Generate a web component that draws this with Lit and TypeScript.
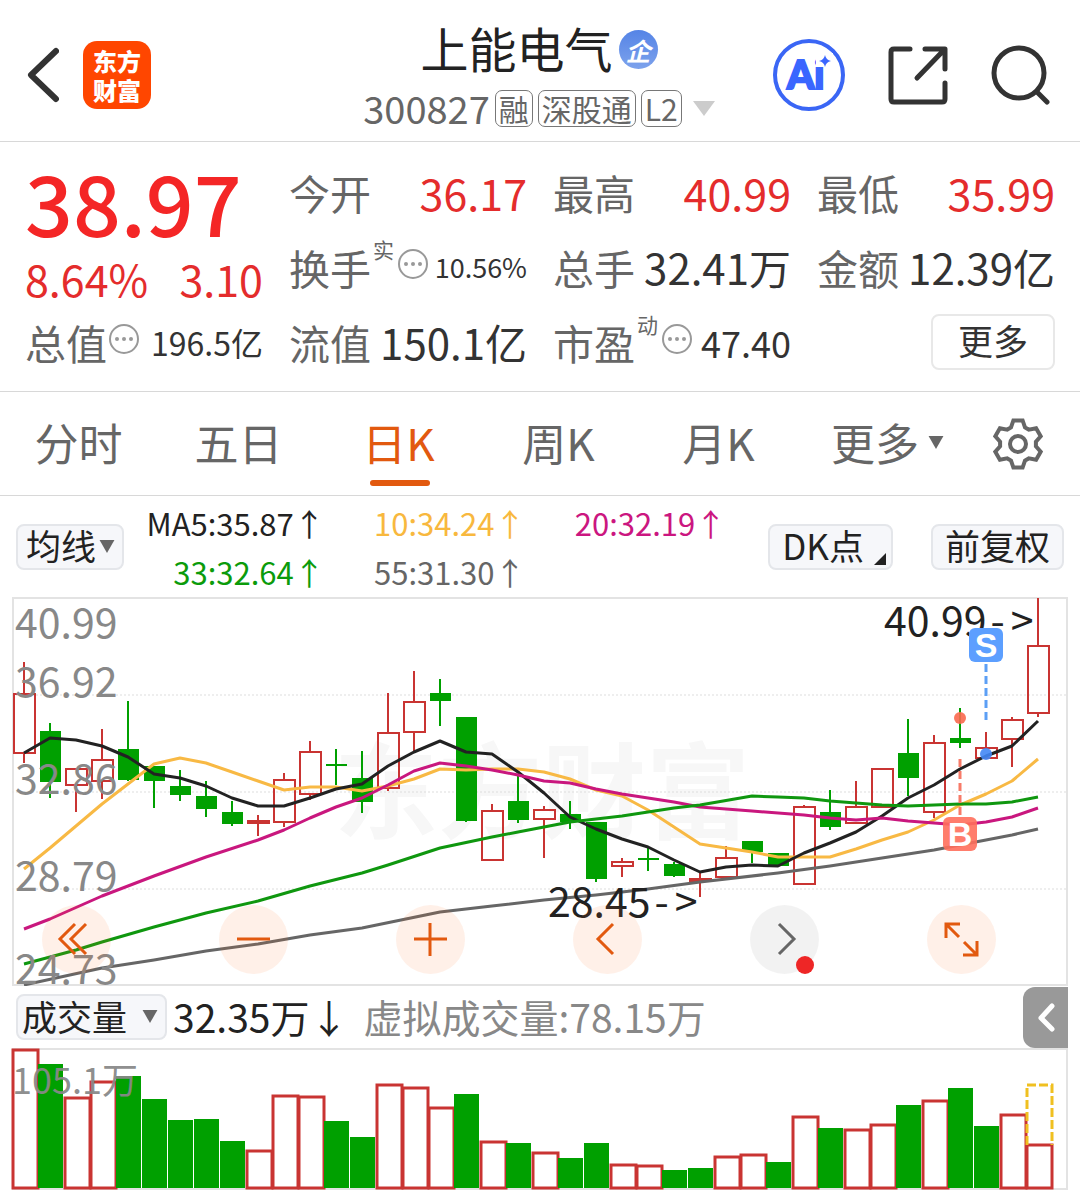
import { LitElement, html, svg, css } from "lit";
import { customElement, state } from "lit/decorators.js";
import { classMap } from "lit/directives/class-map.js";

type Candle = [up: 0 | 1, high: number, top: number, bottom: number, low: number, volumeTop: number];

/* Candle positions in plot units; 1 marks a rising day. */
const CANDLES: Candle[] = [
  [1, 662, 694, 753, 763, 1050], [0, 723, 731, 782, 798, 1064], [1, 769, 769, 785, 812, 1098],
  [1, 729, 760, 781, 799, 1082], [0, 701, 749, 780, 781, 1076], [0, 766, 766, 781, 808, 1099],
  [0, 770, 786, 795, 801, 1120], [0, 781, 796, 809, 817, 1119], [0, 801, 812, 824, 826, 1141],
  [1, 815, 821, 823, 836, 1151], [1, 773, 780, 822, 827, 1096], [1, 741, 752, 794, 800, 1097],
  [0, 749, 764, 766, 785, 1121], [0, 751, 778, 802, 813, 1137], [1, 693, 733, 788, 791, 1085],
  [1, 671, 702, 732, 751, 1088], [1, 679, 693, 701, 726, 1108], [0, 717, 717, 821, 822, 1094],
  [1, 804, 811, 860, 860, 1142], [0, 776, 801, 820, 823, 1143], [1, 806, 810, 819, 858, 1153],
  [0, 801, 814, 822, 829, 1158], [0, 822, 822, 879, 882, 1143], [1, 858, 862, 866, 877, 1165],
  [1, 848, 858, 860, 871, 1166], [0, 862, 864, 876, 877, 1170], [0, 872, 879, 881, 897, 1168],
  [1, 846, 858, 877, 877, 1157], [1, 841, 841, 852, 863, 1155], [0, 853, 853, 866, 866, 1162],
  [1, 805, 807, 884, 885, 1117], [0, 790, 812, 827, 830, 1128], [1, 781, 807, 823, 823, 1130],
  [1, 769, 769, 807, 807, 1125], [0, 719, 753, 778, 796, 1105], [1, 735, 743, 812, 818, 1101],
  [0, 708, 738, 743, 748, 1088], [0, 732, 748, 758, 758, 1126], [1, 717, 720, 739, 767, 1115],
  [1, 598, 646, 713, 717, 1145],
];
/* Days whose candle direction differs from the direction of the volume bar. */
const CANDLE_FLIPPED = new Set([16, 24, 26, 28, 37]);

const AVERAGES = [
  { cls: "ma55", points: "24,985 102,968 154,960 206,951 258,944 310,935 362,928 440,912 492,906 544,900 596,895 648,889 700,882 778,873 830,866 882,858 934,850 986,840 1012,835 1038,829" },
  { cls: "ma10", points: "24,869 50,848 76,826 102,804 128,784 154,764 180,758 206,763 232,772 258,781 284,790 310,787 336,787 362,791 388,786 414,779 440,769 466,770 492,769 518,769 544,772 570,779 596,790 622,796 648,810 674,827 700,844 726,848 752,852 778,857 804,857 830,857 856,849 882,840 908,832 934,820 960,805 986,794 1012,781 1038,759" },
  { cls: "ma5", points: "24,753 50,738 76,740 102,746 128,757 154,774 180,778 206,786 232,798 258,806 284,806 310,798 336,789 362,784 388,766 414,752 440,741 466,752 492,754 518,772 544,793 570,817 596,829 622,839 648,847 674,860 700,872 726,867 752,865 778,866 804,853 830,843 856,832 882,816 908,798 934,785 960,769 986,756 1012,746 1038,721" },
  { cls: "ma20", points: "24,929 50,919 102,896 154,876 206,857 258,840 284,830 310,818 336,807 362,798 388,785 414,771 440,763 466,766 492,770 518,775 544,781 570,783 596,789 622,794 674,802 700,807 752,811 804,815 830,818 856,820 882,818 908,821 934,823 960,825 986,822 1012,817 1038,808" },
  { cls: "ma33", points: "24,964 76,950 102,942 154,927 206,913 258,901 310,886 362,873 388,865 440,848 492,837 518,832 570,822 622,816 674,808 700,805 752,796 778,797 804,798 830,801 882,805 908,806 960,804 986,804 1012,802 1038,797" },
];

const gearPath = () => {
  const pts: string[] = [];
  const at = (deg: number, r: number) => {
    const a = (deg * Math.PI) / 180;
    pts.push(`${(27 + r * Math.cos(a)).toFixed(1)},${(27 + r * Math.sin(a)).toFixed(1)}`);
  };
  for (let t = -90; t < 270; t += 60) {
    at(t - 23, 18); at(t - 11, 24); at(t + 11, 24); at(t + 23, 18);
  }
  return "M" + pts.join("L") + "Z";
};

const caret = html`<svg class="caret" viewBox="0 0 16 14" aria-hidden="true"><path d="M0 0H16L8 14Z" /></svg>`;
const dots = html`<svg class="dots" viewBox="0 0 32 32" aria-hidden="true">
  <circle cx="16" cy="16" r="14" /><g><circle cx="9" cy="16" r="2" /><circle cx="16" cy="16" r="2" /><circle cx="23" cy="16" r="2" /></g></svg>`;

@customElement("app-root")
export class AppRoot extends LitElement {
  static styles = css`
    :host { display: block; background: #fff; color: #333; font-family: "Noto Sans CJK SC", sans-serif; }
    * { box-sizing: border-box; }
    button, select { font: inherit; color: inherit; background: none; border: 0; margin: 0; padding: 0; cursor: pointer; }
    svg { display: block; }
    h1, dl, dt, dd, p { margin: 0; font-weight: 400; }

    header { display: grid; grid-template-columns: 1fr auto 1fr; align-items: center; padding: 18px 29px 13px 27px; border-bottom: 1px solid #d8d8d8; }
    .left, .right, .code, .title { display: flex; align-items: center; }
    .left, .right { padding-top: 3px; }
    .left { gap: 24px; }
    .right { justify-content: flex-end; gap: 43px; }
    .stroke { fill: none; stroke: #333; stroke-width: 5; stroke-linecap: round; stroke-linejoin: round; }
    .back { stroke-width: 6; }
    .logo { display: grid; place-content: center; width: 68px; height: 68px; border-radius: 14px; background: #ff4600; color: #fff; font-size: 24px; font-weight: 900; line-height: 29px; text-decoration: none; text-align: center; }
    .middle { display: grid; justify-items: center; gap: 12px; }
    .title { gap: 6px; height: 58px; color: #222; }
    .title h1 { font-size: 48px; line-height: 58px; }
    .badge { display: grid; place-items: center; width: 39px; height: 39px; margin-top: 5px; border-radius: 50%; background: linear-gradient(#5584e6, #7da2ec); color: #fff; font-size: 25px; line-height: 36px; font-weight: 700; font-style: italic; }
    .code { gap: 5px; height: 40px; color: #666; font-size: 38px; line-height: 38px; }
    .tag { border: 1px solid #777; border-radius: 7px; padding: 0 3px; font-size: 30px; line-height: 35px; }
    .code svg { margin-left: 6px; fill: #ccc; }
    .ai { fill: none; stroke: #3a66f5; stroke-width: 4; }
    .aitext { font: 900 39px Lato, sans-serif; fill: #3a66ff; stroke: #3a66ff; stroke-width: 2; }
    .mask { fill: #fff; }
    .spark { fill: #3a66ff; }

    .quote { display: grid; grid-template-columns: repeat(4, 1fr); grid-auto-rows: 75px; column-gap: 26px; padding: 12px 25px; border-bottom: 1px solid #d8d8d8; }
    .price { grid-row: span 2; color: #f42626; }
    .last { font-size: 84px; line-height: 94px; font-weight: 500; white-space: nowrap; }
    .change { display: flex; justify-content: space-between; color: #e42c2c; font-size: 43px; line-height: 60px; }
    .pair { display: flex; align-items: center; justify-content: space-between; white-space: nowrap; line-height: 60px; }
    .pair dt { display: flex; align-items: center; color: #666; font-size: 41px; }
    .pair sup { align-self: flex-start; margin: 0 2px; font-size: 21px; line-height: 24px; }
    .pair dd { font-size: 42px; }
    .pair dd.up { color: #e42c2c; font-size: 43px; }
    .pair dd.s { font-size: 27px; }
    .pair dd.m { font-size: 32px; }
    .pair dd.l { font-size: 36px; }
    .dots { width: 32px; height: 32px; margin: 0 0 6px 1px; fill: none; stroke: #999; stroke-width: 2; }
    .dots g { fill: #999; stroke: none; }
    .more { align-self: center; justify-self: end; width: 124px; height: 56px; padding-bottom: 3px; border: 2px solid #e8e8e8; border-radius: 8px; font-size: 35px; line-height: 48px; }

    .tabs { display: grid; grid-template-columns: repeat(5, 160fr) 178fr 80fr; height: 104px; padding-right: 22px; border-bottom: 1px solid #d8d8d8; }
    .tab { display: grid; grid-template-rows: 88px 6px; justify-items: center; color: #666; font-size: 44px; line-height: 88px; white-space: nowrap; }
    .tab span { display: flex; align-items: center; gap: 9px; height: 100px; padding-right: 3px; }
    .tab.on { color: #e2590f; }
    .tab.on::after { content: ""; width: 60px; height: 6px; border-radius: 3px; background: #e2590f; }
    .caret { width: 16px; height: 13px; fill: #666; }
    .gear { display: grid; place-items: center; }
    .gear svg { fill: none; stroke: #666; stroke-width: 4; }

    .tools { display: flex; align-items: center; height: 101px; padding: 0 16px; }
    .box { display: flex; align-items: center; height: 46px; border: 2px solid #e4e6ea; border-radius: 8px; background: #f6f7fa; color: #222; font-size: 35px; line-height: 40px; white-space: nowrap; }
    .pick { position: relative; }
    .pick select { appearance: none; width: 100%; height: 42px; padding: 0 0 3px 8px; line-height: 38px; outline-offset: 2px; }
    .pick .caret { position: absolute; right: 7px; top: 14px; pointer-events: none; }
    .pick.avg { width: 108px; }
    .pick.vol { width: 151px; }
    .pick.vol select { padding-left: 4px; }
    .plain { padding: 0 12px 3px; }
    .dk { gap: 10px; padding-right: 5px; margin-right: 38px; }
    .dk svg { align-self: flex-end; fill: #222; }
    .averages { flex: 1; display: grid; grid-template-columns: repeat(3, 1fr); grid-auto-rows: 49px; justify-items: end; margin-right: 42px; font-size: 31px; line-height: 49px; white-space: nowrap; }
    .c5 { color: #222; } .c10 { color: #f8b83e; } .c20 { color: #cb1680; } .c33 { color: #0b9b0b; } .c55 { color: #666; }

    .chart { position: relative; }
    .chart svg.plot, .volume { width: 100%; height: auto; }
    .frame { fill: none; stroke: #e3e3e3; stroke-width: 2; }
    .grid { stroke: #ddd; stroke-width: 1; stroke-dasharray: 2 2; }
    .mark { font: 700 104px "Noto Sans CJK SC", sans-serif; fill: #f7f7f7; }
    .up { fill: none; stroke: #c93432; stroke-width: 2; }
    .down { fill: #00a000; stroke: #00a000; stroke-width: 2; }
    .body { stroke-width: 0; }
    .ma { fill: none; stroke-width: 3; stroke-linejoin: round; }
    .ma5 { stroke: #222; } .ma10 { stroke: #f8b944; } .ma20 { stroke: #c9177e; } .ma33 { stroke: #0f970f; } .ma55 { stroke: #666; }
    .axis { font-size: 41px; fill: #888; }
    .note { font-size: 41px; fill: #222; }
    .signal { font: 700 34px "Liberation Sans", sans-serif; fill: #fff; text-anchor: middle; }
    .sell { fill: #5c9fff; } .buy { fill: #ff6f5c; fill-opacity: 0.9; }
    .sellline { stroke: #5c9ff5; stroke-width: 3; stroke-dasharray: 8 4; }
    .buyline { stroke: #f77b68; stroke-width: 3; stroke-dasharray: 8 4; }
    .selldot { fill: #4287f5; fill-opacity: 0.9; } .buydot { fill: #f9694f; fill-opacity: 0.9; }
    .pad { position: absolute; left: 42px; right: 84px; bottom: 12px; display: flex; justify-content: space-between; }
    .pad button { position: relative; width: 69px; height: 69px; border-radius: 50%; background: rgba(255, 106, 26, 0.1); }
    .pad svg { fill: none; stroke: #e2590f; stroke-width: 3; }
    .pad .next { background: rgba(0, 0, 0, 0.05); }
    .pad .next svg { stroke: #666; }
    .dot { position: absolute; right: 5px; bottom: 0; width: 18px; height: 18px; border-radius: 50%; background: #ee2626; }

    .volhead { display: flex; align-items: center; height: 62px; padding: 0 12px 0 16px; font-size: 39px; line-height: 56px; white-space: nowrap; }
    .volnow { margin: 0 15px 0 6px; padding-bottom: 2px; color: #222; }
    .virtual { padding-bottom: 2px; color: #888; }
    .side { margin-left: auto; width: 45px; height: 61px; border-radius: 12px 0 0 12px; background: #999; }
    .side svg { fill: none; stroke: #fff; stroke-width: 5; stroke-linecap: round; stroke-linejoin: round; }
    .vup { fill: #fff; stroke: #c93432; stroke-width: 3; }
    .vdown { fill: #00a000; }
    .forecast { fill: none; stroke: #f0c020; stroke-width: 3; stroke-dasharray: 9 3; }
    .vaxis { font-size: 36px; fill: #888; fill-opacity: 0.95; }
  `;

  @state() private tab = "日K";

  private pair(label: string, value: string, size = "", sup = "", info = false) {
    return html`<div class="pair">
      <dt>${label}${sup ? html`<sup>${sup}</sup>` : ""}${info ? dots : ""}</dt>
      <dd class=${size}>${value}</dd>
    </div>`;
  }

  private candle([volumeUp, high, top, bottom, low]: Candle, i: number) {
    const x = 24 + 26 * i;
    const up = CANDLE_FLIPPED.has(i) ? !volumeUp : !!volumeUp;
    return up
      ? svg`<g class="up"><path d="M${x} ${high}V${top}M${x} ${bottom}V${low}" /><rect x=${x - 10} y=${top} width="21" height=${bottom - top} /></g>`
      : svg`<g class="down"><path d="M${x} ${high}V${low}" /><rect class="body" x=${x - 10} y=${top} width="21" height=${bottom - top} /></g>`;
  }

  private bar([up, , , , , top]: Candle, i: number) {
    const x = 12 + 26 * i;
    return up
      ? svg`<rect class="vup" x=${x + 1} y=${top} width="25" height=${1188 - top} />`
      : svg`<rect class="vdown" x=${x} y=${top} width="25" height=${1188 - top} />`;
  }

  render() {
    return html`
      <header>
        <div class="left">
          <button aria-label="返回"><svg width="32" height="56" viewBox="0 0 32 56"><path class="stroke back" d="M29 4L4 28L29 52" /></svg></button>
          <a class="logo" href="#">东方<br />财富</a>
        </div>
        <div class="middle">
          <div class="title"><h1>上能电气</h1><span class="badge">企</span></div>
          <div class="code">
            <span>300827</span><span class="tag">融</span><span class="tag">深股通</span><span class="tag">L2</span>
            <svg width="22" height="15" viewBox="0 0 22 15"><path d="M0 0H22L11 15Z" /></svg>
          </div>
        </div>
        <div class="right">
          <button aria-label="Ai">
            <svg width="72" height="72" viewBox="0 0 72 72">
              <circle class="ai" cx="36" cy="36" r="34" />
              <text class="aitext" x="14" y="50">Ai</text>
              <rect class="mask" x="43" y="14" width="17" height="14" />
              <path class="spark" d="M52 16Q53 21 58 22Q53 23 52 28Q51 23 46 22Q51 21 52 16Z" />
            </svg>
          </button>
          <button aria-label="分享">
            <svg width="60" height="60" viewBox="0 0 60 60"><path class="stroke" d="M22 4H6Q3 4 3 7V54Q3 57 6 57H54Q57 57 57 54V38M37 4H57V24M56 5L29 33" /></svg>
          </button>
          <button aria-label="搜索">
            <svg width="60" height="60" viewBox="0 0 60 60"><circle class="stroke" cx="28" cy="28" r="25" /><path class="stroke" d="M46 47L56 57" /></svg>
          </button>
        </div>
      </header>

      <dl class="quote">
        <div class="price">
          <p class="last">38.97</p>
          <p class="change"><span>8.64%</span><span>3.10</span></p>
        </div>
        ${this.pair("今开", "36.17", "up")}
        ${this.pair("最高", "40.99", "up")}
        ${this.pair("最低", "35.99", "up")}
        ${this.pair("换手", "10.56%", "s", "实", true)}
        ${this.pair("总手", "32.41万")}
        ${this.pair("金额", "12.39亿")}
        ${this.pair("总值", "196.5亿", "m", "", true)}
        ${this.pair("流值", "150.1亿")}
        ${this.pair("市盈", "47.40", "l", "动", true)}
        <button class="more">更多</button>
      </dl>

      <nav class="tabs">
        ${["分时", "五日", "日K", "周K", "月K", "更多"].map(
          (t) => html`<button class=${classMap({ tab: true, on: t === this.tab })} @click=${() => (this.tab = t)}>
            <span>${t}${t === "更多" ? caret : ""}</span>
          </button>`
        )}
        <button class="gear" aria-label="设置">
          <svg width="54" height="54" viewBox="0 0 54 54"><path d=${gearPath()} /><circle cx="27" cy="27" r="8" /></svg>
        </button>
      </nav>

      <div class="tools">
        <div class="box pick avg"><select aria-label="均线"><option>均线</option></select>${caret}</div>
        <div class="averages">
          <span class="c5">MA5:35.87↑</span><span class="c10">10:34.24↑</span><span class="c20">20:32.19↑</span>
          <span class="c33">33:32.64↑</span><span class="c55">55:31.30↑</span>
        </div>
        <button class="box plain dk">DK点<svg width="12" height="12" viewBox="0 0 12 12"><path d="M12 0V12H0Z" /></svg></button>
        <button class="box plain">前复权</button>
      </div>

      <div class="chart">
        <svg class="plot" viewBox="0 597 1080 389">
          <text class="mark" x="334" y="831">东方财富</text>
          <rect class="frame" x="13" y="598" width="1054" height="387" />
          ${[695, 792, 889].map((y) => svg`<path class="grid" d="M12 ${y}H1067" />`)}
          ${CANDLES.map((c, i) => this.candle(c, i))}
          ${AVERAGES.map((a) => svg`<polyline class="ma ${a.cls}" points=${a.points} />`)}
          <text class="axis" x="15" y="638">40.99</text>
          <text class="axis" x="15" y="697">36.92</text>
          <text class="axis" x="15" y="794">32.86</text>
          <text class="axis" x="15" y="891">28.79</text>
          <text class="axis" x="15" y="984">24.73</text>
          <text class="note" x="884" y="636">40.99<tspan dx="4">-</tspan><tspan dx="6">&gt;</tspan></text>
          <text class="note" x="548" y="917">28.45<tspan dx="4">-</tspan><tspan dx="6">&gt;</tspan></text>
          <path class="sellline" d="M986 664V720" />
          <rect class="sell" x="969" y="628" width="34" height="34" rx="6" />
          <text class="signal" x="986" y="657">S</text>
          <circle class="selldot" cx="986" cy="754" r="6" />
          <circle class="buydot" cx="960" cy="718" r="6" />
          <path class="buyline" d="M960 759V816" />
          <rect class="buy" x="943" y="817" width="34" height="34" rx="6" />
          <text class="signal" x="960" y="846">B</text>
        </svg>
        <div class="pad">
          <button aria-label="最左"><svg viewBox="0 0 69 69"><path d="M33 19L18 34L33 49M44 19L29 34L44 49" /></svg></button>
          <button aria-label="缩小"><svg viewBox="0 0 69 69"><path d="M18 34H51" /></svg></button>
          <button aria-label="放大"><svg viewBox="0 0 69 69"><path d="M18 34H51M34 18V51" /></svg></button>
          <button aria-label="左移"><svg viewBox="0 0 69 69"><path d="M40 19L25 34L40 49" /></svg></button>
          <button class="next" aria-label="右移"><svg viewBox="0 0 69 69"><path d="M29 19L44 34L29 49" /></svg><i class="dot"></i></button>
          <button aria-label="全屏"><svg viewBox="0 0 69 69"><path d="M19 33V19H33M19 19L32 32M50 36V50H36M50 50L37 37" /></svg></button>
        </div>
      </div>

      <div class="volhead">
        <div class="box pick vol"><select aria-label="成交量"><option>成交量</option></select>${caret}</div>
        <span class="volnow">32.35万↓</span>
        <span class="virtual">虚拟成交量:78.15万</span>
        <button class="side" aria-label="展开"><svg width="45" height="61" viewBox="0 0 45 61"><path d="M29 19L18 31L29 42" /></svg></button>
      </div>

      <svg class="volume" viewBox="0 1048 1080 145">
        <rect class="frame" x="13" y="1049" width="1054" height="140" />
        ${CANDLES.map((c, i) => this.bar(c, i))}
        <path class="forecast" d="M1027 1145V1085H1052V1145" />
        <text class="vaxis" x="12" y="1094">105.1万</text>
      </svg>
    `;
  }
}
